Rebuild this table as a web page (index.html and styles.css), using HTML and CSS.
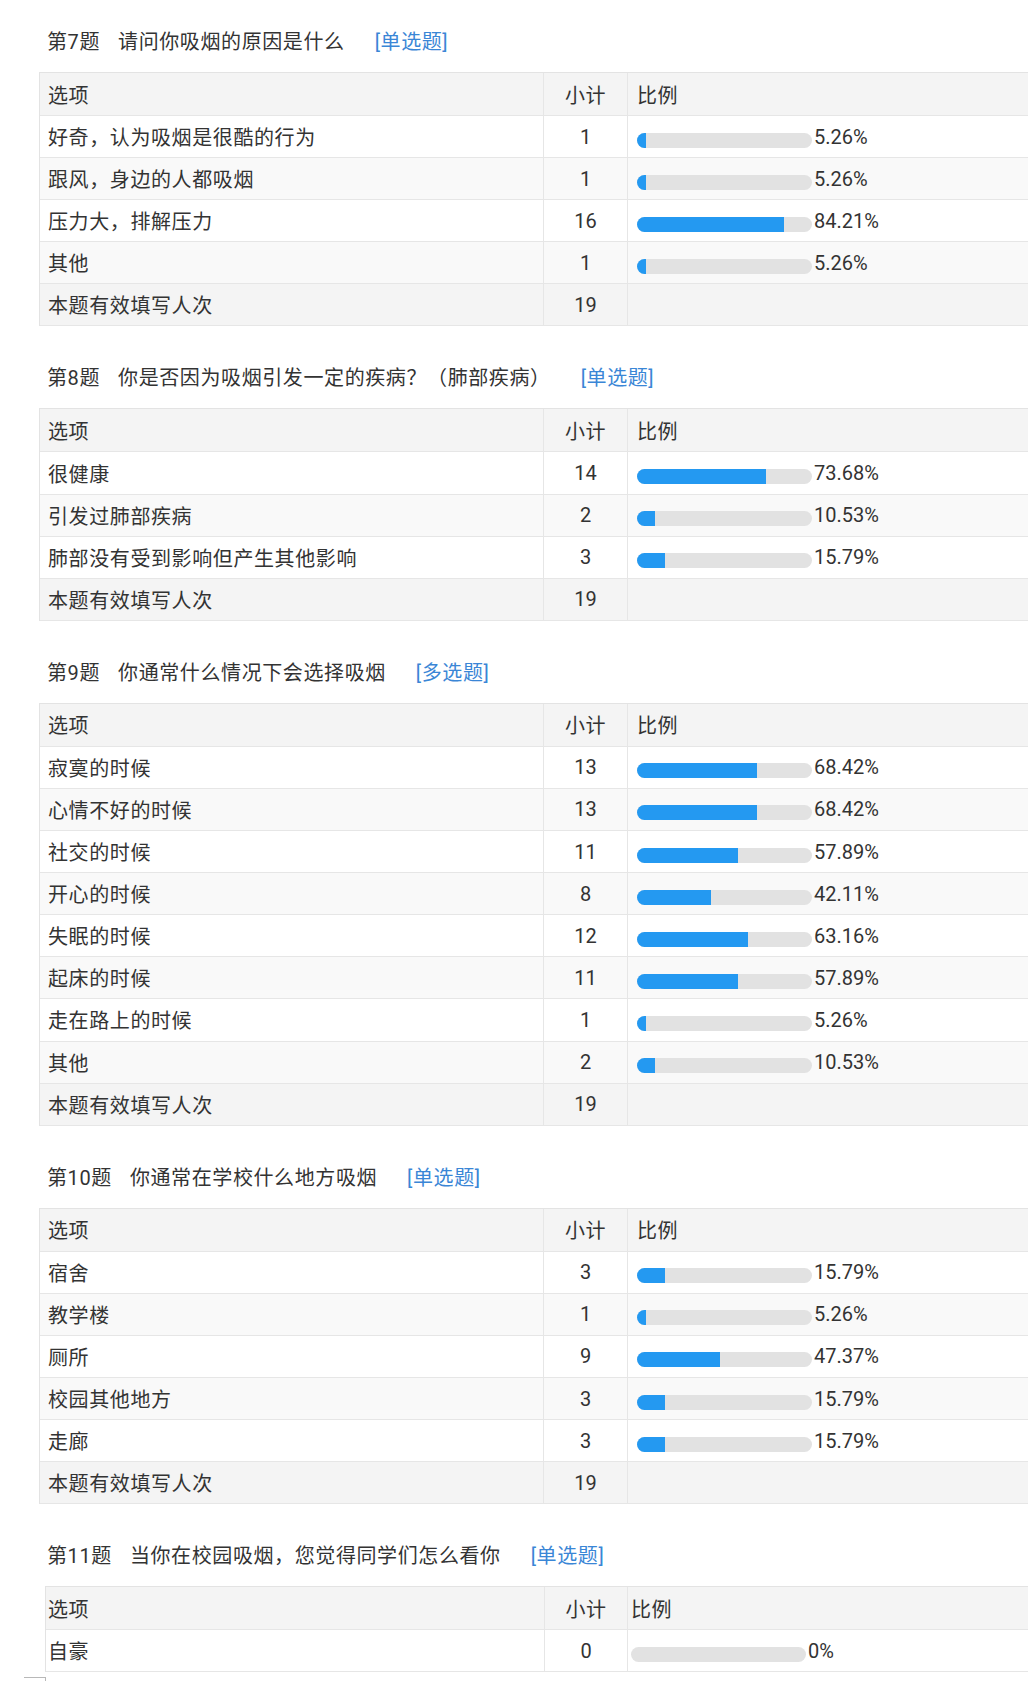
FILE: index.html
```html
<!DOCTYPE html>
<html lang="zh-CN">
<head>
<meta charset="utf-8">
<title>调查结果</title>
<link rel="stylesheet" href="styles.css">
</head>
<body>
<div class="page">

  <section class="q">
    <h2 class="q-title"><span class="q-no">第7题</span><span class="q-text">请问你吸烟的原因是什么</span><span class="q-type">[单选题]</span></h2>
    <div class="tbl">
      <div class="tr th"><div class="c-opt">选项</div><div class="c-cnt">小计</div><div class="c-ratio">比例</div></div>
      <div class="tr"><div class="c-opt">好奇，认为吸烟是很酷的行为</div><div class="c-cnt">1</div><div class="c-ratio"><span class="bar"><span class="fill" style="width:5.26%"></span></span><span class="pct">5.26%</span></div></div>
      <div class="tr"><div class="c-opt">跟风，身边的人都吸烟</div><div class="c-cnt">1</div><div class="c-ratio"><span class="bar"><span class="fill" style="width:5.26%"></span></span><span class="pct">5.26%</span></div></div>
      <div class="tr"><div class="c-opt">压力大，排解压力</div><div class="c-cnt">16</div><div class="c-ratio"><span class="bar"><span class="fill" style="width:84.21%"></span></span><span class="pct">84.21%</span></div></div>
      <div class="tr"><div class="c-opt">其他</div><div class="c-cnt">1</div><div class="c-ratio"><span class="bar"><span class="fill" style="width:5.26%"></span></span><span class="pct">5.26%</span></div></div>
      <div class="tr total"><div class="c-opt">本题有效填写人次</div><div class="c-cnt">19</div><div class="c-ratio"></div></div>
    </div>
  </section>

  <section class="q">
    <h2 class="q-title"><span class="q-no">第8题</span><span class="q-text">你是否因为吸烟引发一定的疾病？（肺部疾病）</span><span class="q-type">[单选题]</span></h2>
    <div class="tbl">
      <div class="tr th"><div class="c-opt">选项</div><div class="c-cnt">小计</div><div class="c-ratio">比例</div></div>
      <div class="tr"><div class="c-opt">很健康</div><div class="c-cnt">14</div><div class="c-ratio"><span class="bar"><span class="fill" style="width:73.68%"></span></span><span class="pct">73.68%</span></div></div>
      <div class="tr"><div class="c-opt">引发过肺部疾病</div><div class="c-cnt">2</div><div class="c-ratio"><span class="bar"><span class="fill" style="width:10.53%"></span></span><span class="pct">10.53%</span></div></div>
      <div class="tr"><div class="c-opt">肺部没有受到影响但产生其他影响</div><div class="c-cnt">3</div><div class="c-ratio"><span class="bar"><span class="fill" style="width:15.79%"></span></span><span class="pct">15.79%</span></div></div>
      <div class="tr total"><div class="c-opt">本题有效填写人次</div><div class="c-cnt">19</div><div class="c-ratio"></div></div>
    </div>
  </section>

  <section class="q">
    <h2 class="q-title"><span class="q-no">第9题</span><span class="q-text">你通常什么情况下会选择吸烟</span><span class="q-type">[多选题]</span></h2>
    <div class="tbl">
      <div class="tr th"><div class="c-opt">选项</div><div class="c-cnt">小计</div><div class="c-ratio">比例</div></div>
      <div class="tr"><div class="c-opt">寂寞的时候</div><div class="c-cnt">13</div><div class="c-ratio"><span class="bar"><span class="fill" style="width:68.42%"></span></span><span class="pct">68.42%</span></div></div>
      <div class="tr"><div class="c-opt">心情不好的时候</div><div class="c-cnt">13</div><div class="c-ratio"><span class="bar"><span class="fill" style="width:68.42%"></span></span><span class="pct">68.42%</span></div></div>
      <div class="tr"><div class="c-opt">社交的时候</div><div class="c-cnt">11</div><div class="c-ratio"><span class="bar"><span class="fill" style="width:57.89%"></span></span><span class="pct">57.89%</span></div></div>
      <div class="tr"><div class="c-opt">开心的时候</div><div class="c-cnt">8</div><div class="c-ratio"><span class="bar"><span class="fill" style="width:42.11%"></span></span><span class="pct">42.11%</span></div></div>
      <div class="tr"><div class="c-opt">失眠的时候</div><div class="c-cnt">12</div><div class="c-ratio"><span class="bar"><span class="fill" style="width:63.16%"></span></span><span class="pct">63.16%</span></div></div>
      <div class="tr"><div class="c-opt">起床的时候</div><div class="c-cnt">11</div><div class="c-ratio"><span class="bar"><span class="fill" style="width:57.89%"></span></span><span class="pct">57.89%</span></div></div>
      <div class="tr"><div class="c-opt">走在路上的时候</div><div class="c-cnt">1</div><div class="c-ratio"><span class="bar"><span class="fill" style="width:5.26%"></span></span><span class="pct">5.26%</span></div></div>
      <div class="tr"><div class="c-opt">其他</div><div class="c-cnt">2</div><div class="c-ratio"><span class="bar"><span class="fill" style="width:10.53%"></span></span><span class="pct">10.53%</span></div></div>
      <div class="tr total"><div class="c-opt">本题有效填写人次</div><div class="c-cnt">19</div><div class="c-ratio"></div></div>
    </div>
  </section>

  <section class="q">
    <h2 class="q-title"><span class="q-no">第10题</span><span class="q-text">你通常在学校什么地方吸烟</span><span class="q-type">[单选题]</span></h2>
    <div class="tbl">
      <div class="tr th"><div class="c-opt">选项</div><div class="c-cnt">小计</div><div class="c-ratio">比例</div></div>
      <div class="tr"><div class="c-opt">宿舍</div><div class="c-cnt">3</div><div class="c-ratio"><span class="bar"><span class="fill" style="width:15.79%"></span></span><span class="pct">15.79%</span></div></div>
      <div class="tr"><div class="c-opt">教学楼</div><div class="c-cnt">1</div><div class="c-ratio"><span class="bar"><span class="fill" style="width:5.26%"></span></span><span class="pct">5.26%</span></div></div>
      <div class="tr"><div class="c-opt">厕所</div><div class="c-cnt">9</div><div class="c-ratio"><span class="bar"><span class="fill" style="width:47.37%"></span></span><span class="pct">47.37%</span></div></div>
      <div class="tr"><div class="c-opt">校园其他地方</div><div class="c-cnt">3</div><div class="c-ratio"><span class="bar"><span class="fill" style="width:15.79%"></span></span><span class="pct">15.79%</span></div></div>
      <div class="tr"><div class="c-opt">走廊</div><div class="c-cnt">3</div><div class="c-ratio"><span class="bar"><span class="fill" style="width:15.79%"></span></span><span class="pct">15.79%</span></div></div>
      <div class="tr total"><div class="c-opt">本题有效填写人次</div><div class="c-cnt">19</div><div class="c-ratio"></div></div>
    </div>
  </section>

  <section class="q q-last">
    <h2 class="q-title"><span class="q-no">第11题</span><span class="q-text">当你在校园吸烟，您觉得同学们怎么看你</span><span class="q-type">[单选题]</span></h2>
    <div class="tbl tbl-alt">
      <div class="tr th"><div class="c-opt">选项</div><div class="c-cnt">小计</div><div class="c-ratio">比例</div></div>
      <div class="tr"><div class="c-opt">自豪</div><div class="c-cnt">0</div><div class="c-ratio"><span class="bar"><span class="fill" style="width:0%"></span></span><span class="pct">0%</span></div></div>
    </div>
    <div class="corner"></div>
  </section>

</div>
</body>
</html>
```
FILE: styles.css
```css
html, body {
  margin: 0;
  padding: 0;
  overflow: hidden;
  background: #ffffff;
}

body {
  font-family: Roboto, "Noto Sans CJK SC", sans-serif;
  font-size: 20px;
  color: #333333;
}

.page {
  padding-top: 28px;
}

.q {
  margin-bottom: 38px;
}

.q-last {
  margin-bottom: 0;
}

.q-title {
  margin: 0 0 16px 47px;
  height: 28px;
  line-height: 28px;
  font-size: 20px;
  font-weight: normal;
  color: #333333;
  white-space: nowrap;
  display: flex;
  letter-spacing: 0.6px;
}

.q-no {
  margin-right: 18px;
}

.q-type {
  margin-left: 30px;
  color: #3a86d6;
}

.tbl {
  margin-left: 39px;
  border-top: 1px solid #e3e3e3;
  border-left: 1px solid #e3e3e3;
}

.tr {
  display: grid;
  grid-template-columns: 504px 84px 1fr;
  height: 42.1px;
  box-sizing: border-box;
  border-bottom: 1px solid #e6e6e6;
  background: #ffffff;
}

.tr:nth-child(odd) {
  background: #f9f9f9;
}

.tr.th {
  height: 43px;
  background: #f4f4f4;
}

.tr.total {
  background: #f4f4f4;
}

.c-opt,
.c-cnt,
.c-ratio {
  display: flex;
  align-items: center;
  white-space: nowrap;
}

.c-opt {
  padding-left: 8px;
  border-right: 1px solid #e6e6e6;
  letter-spacing: 0.6px;
}

.c-cnt {
  justify-content: center;
  border-right: 1px solid #e6e6e6;
}

.th .c-cnt,
.th .c-ratio {
  letter-spacing: 0.6px;
}

.c-ratio {
  padding-left: 9px;
}

.bar {
  display: block;
  width: 175px;
  height: 15px;
  margin-top: 7px;
  margin-right: 2px;
  border-radius: 8px;
  background: #e2e2e2;
  overflow: hidden;
  flex: none;
}

.fill {
  display: block;
  height: 100%;
  background: #2499f1;
}

.pct {
  line-height: 1;
}

/* Q11 table is offset slightly differently in the capture */
.tbl-alt {
  margin-left: 45px;
}

.tbl-alt .tr {
  grid-template-columns: 499px 83px 1fr;
}

.tbl-alt .c-opt {
  padding-left: 2px;
}

.tbl-alt .c-ratio {
  padding-left: 3px;
}

.corner {
  margin: 5px 0 0 24px;
  width: 21px;
  height: 6px;
  border-top: 1px solid #b8b8b8;
  border-right: 1px solid #b8b8b8;
}
```
